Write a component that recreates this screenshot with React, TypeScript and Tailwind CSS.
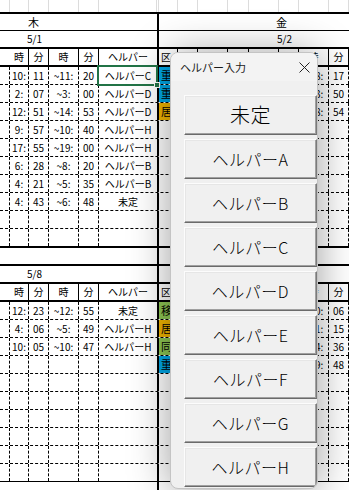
import React from "react";

// column widths: 木 side | thick | 金 side
const COLS =
  "grid grid-cols-[10px_19px_20px_30px_20px_58px_2px_19px_20px_30px_21px_30px_20px_30px_20px]";

type Row = {
  h1?: string;
  m1?: string;
  h2?: string;
  m2?: string;
  who?: string;
  ku?: string;
  kh?: string;
  km?: string;
};

const KU_COLOR: Record<string, string> = {
  重: "bg-[#00a6e6]",
  居: "bg-[#f0b400]",
  移: "bg-[#8dc653]",
  同: "bg-[#8dc653]",
};

const WEEK1: Row[] = [
  { h1: "10:", m1: "11", h2: "~11:", m2: "20", who: "ヘルパーC", ku: "重", kh: "~18:", km: "17" },
  { h1: "2:", m1: "07", h2: "~3:", m2: "00", who: "ヘルパーD", ku: "重", kh: "~13:", km: "50" },
  { h1: "12:", m1: "51", h2: "~14:", m2: "53", who: "ヘルパーD", ku: "居", kh: "~18:", km: "54" },
  { h1: "9:", m1: "57", h2: "~10:", m2: "40", who: "ヘルパーH" },
  { h1: "17:", m1: "55", h2: "~19:", m2: "00", who: "ヘルパーH" },
  { h1: "6:", m1: "28", h2: "~8:", m2: "20", who: "ヘルパーB" },
  { h1: "4:", m1: "21", h2: "~5:", m2: "35", who: "ヘルパーB" },
  { h1: "4:", m1: "43", h2: "~6:", m2: "48", who: "未定" },
  {},
  {},
];

const WEEK2: Row[] = [
  { h1: "12:", m1: "23", h2: "~12:", m2: "55", who: "未定", ku: "移", kh: "~10:", km: "06" },
  { h1: "4:", m1: "06", h2: "~5:", m2: "49", who: "ヘルパーH", ku: "居", kh: "~11:", km: "15" },
  { h1: "10:", m1: "05", h2: "~10:", m2: "47", who: "ヘルパーH", ku: "同", kh: "~14:", km: "36" },
  { ku: "重", kh: "~19:", km: "48" },
  {},
  {},
  {},
  {},
  {},
  {},
];

const HELPERS = [
  "未定",
  "ヘルパーA",
  "ヘルパーB",
  "ヘルパーC",
  "ヘルパーD",
  "ヘルパーE",
  "ヘルパーF",
  "ヘルパーG",
  "ヘルパーH",
];

function Dash({ children, className = "" }: { children?: React.ReactNode; className?: string }) {
  return (
    <div className={`flex items-center justify-center border-r border-dashed border-black ${className}`}>
      {children}
    </div>
  );
}

function Solid({ children }: { children?: React.ReactNode }) {
  return <div className="flex items-center justify-center border-r border-black">{children}</div>;
}

function DataRow({ r, last }: { r: Row; last?: boolean }) {
  return (
    <div className={`${COLS} ${last ? "h-[17px]" : "h-[18px] border-b border-dashed border-black"}`}>
      <Dash />
      <Dash>{r.h1}</Dash>
      <Dash>{r.m1}</Dash>
      <Dash>{r.h2}</Dash>
      <Dash>{r.m2}</Dash>
      <div className="flex items-center justify-center">{r.who}</div>
      <div className="bg-black" />
      <div
        className={`flex items-center pl-[2px] border-r border-dashed border-black text-[11px] ${
          r.ku ? KU_COLOR[r.ku] : ""
        }`}
      >
        {r.ku}
      </div>
      <Dash />
      <Dash />
      <Dash />
      <Dash />
      <Dash />
      <Dash>{r.kh}</Dash>
      <Dash>{r.km}</Dash>
    </div>
  );
}

function HeaderRow() {
  return (
    <div className={`${COLS} h-[16px]`}>
      <div />
      <Solid>時</Solid>
      <Solid>分</Solid>
      <Solid>時</Solid>
      <Solid>分</Solid>
      <div className="flex items-center justify-center">ヘルパー</div>
      <div className="bg-black" />
      <div className="flex items-center pl-[2px] border-r border-black overflow-hidden">区</div>
      <Solid />
      <Solid />
      <Solid />
      <Solid />
      <Solid />
      <Solid>時</Solid>
      <Solid>分</Solid>
    </div>
  );
}

function MergedRow({
  left,
  right,
  pl,
  pr,
  className = "",
}: {
  left?: string;
  right?: string;
  pl: string;
  pr: string;
  className?: string;
}) {
  return (
    <div className={`flex ${className}`}>
      <div className={`w-[157px] flex items-center ${pl}`}>{left}</div>
      <div className="w-[2px] bg-black" />
      <div className={`flex-1 flex items-center ${pr}`}>{right}</div>
    </div>
  );
}

function Thick() {
  return <div className="h-[2px] bg-black" />;
}

function Week({ rows }: { rows: Row[] }) {
  return (
    <>
      {rows.map((r, i) => (
        <DataRow key={i} r={r} last={i === rows.length - 1} />
      ))}
    </>
  );
}

function HelperDialog() {
  return (
    <div className="absolute left-[170px] top-[52px] w-[148px] h-[437px] rounded-[8px] border border-[#c4c4c4] bg-[#f0f0f0] overflow-hidden shadow-[0_2px_40px_rgba(0,0,0,0.38)]">
      <div className="h-[28px] flex items-center justify-between pl-[9px] pr-[7px] bg-[#f3f3f3] text-[11px] text-[#1a1a1a]">
        <span>ヘルパー入力</span>
        <svg width="11" height="11" viewBox="0 0 11 11">
          <path d="M0.5 0.5 L10.5 10.5 M10.5 0.5 L0.5 10.5" stroke="#222" strokeWidth="1" />
        </svg>
      </div>
      <div className="pt-[14px] pl-[13px] flex flex-col gap-[4px]">
        {HELPERS.map((h) => (
          <button
            key={h}
            className={`w-[133px] h-[40px] flex items-center justify-center bg-[#f0f0f0] border border-t-[#fcfcfc] border-l-[#fcfcfc] border-r-[#7a7a7a] border-b-[#6a6a6a] shadow-[inset_-1px_-1px_0_#a0a0a0,inset_1px_1px_0_#e6e6e6] text-black font-light tracking-[0.5px] ${
              h === "未定" ? "text-[20px]" : "text-[16px]"
            }`}
          >
            {h}
          </button>
        ))}
      </div>
    </div>
  );
}

export default function App() {
  return (
    <div className="relative w-[349px] h-[490px] overflow-hidden bg-white text-[10px] leading-none text-black font-['Noto_Sans_CJK_JP',sans-serif]">
      {/* top partial row with light gridlines */}
      <div className={`${COLS} h-[12px]`}>
        {Array.from({ length: 15 }).map((_, i) => (
          <div key={i} className="border-r border-[#dcdcdc]" />
        ))}
      </div>
      <Thick />
      <MergedRow left="木" right="金" pl="pl-[28px]" pr="pl-[117px]" className="h-[17px] border-b border-black text-[11px]" />
      <MergedRow left="5/1" right="5/2" pl="pl-[27px]" pr="pl-[118px]" className="h-[16px]" />
      <Thick />
      <HeaderRow />
      <Thick />
      <Week rows={WEEK1} />
      <Thick />
      <MergedRow pl="" pr="" className="h-[16px]" />
      <Thick />
      <MergedRow left="5/8" pl="pl-[27px]" pr="" className="h-[16px]" />
      <Thick />
      <HeaderRow />
      <Thick />
      <Week rows={WEEK2} />
      <div className="h-px bg-black" />
      <MergedRow pl="" pr="" className="h-[10px]" />

      {/* active cell selection */}
      <div className="absolute left-[97px] top-[65px] w-[61px] h-[21px] border-2 border-[#217346]" />
      <div className="absolute left-[154px] top-[82px] w-[6px] h-[6px] bg-[#217346] border border-white" />

      <HelperDialog />
    </div>
  );
}
